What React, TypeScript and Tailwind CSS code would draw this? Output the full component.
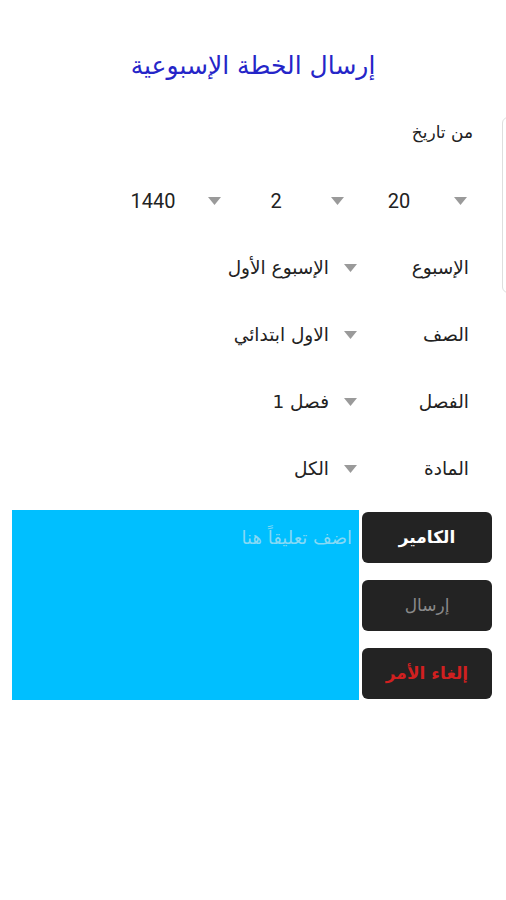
import React from "react";

const Arrow = () => (
  <svg width="13" height="8" viewBox="0 0 13 8" className="shrink-0">
    <polygon points="0,0 13,0 6.5,8" fill="#9a9a9a" />
  </svg>
);

const Spinner = ({ value }: { value: string }) => (
  <div className="flex w-[123px] items-center">
    <Arrow />
    <div className="flex-1 text-center text-[20px] text-[#222]" style={{ fontFamily: "Roboto, sans-serif" }}>
      {value}
    </div>
  </div>
);

const Row = ({ label, value }: { label: string; value: string }) => (
  <div className="flex h-[67px] items-center pr-[37px]">
    <div className="w-[112px] text-[18.5px] text-[#222]">{label}</div>
    <Arrow />
    <div className="mr-[15px] text-[18.5px] text-[#222]">{value}</div>
  </div>
);

export default function App() {
  return (
    <div
      dir="rtl"
      className="relative h-[900px] w-[506px] overflow-hidden bg-white"
      style={{ fontFamily: '"DejaVu Sans", "Noto Sans", sans-serif' }}
    >
      <div className="absolute right-[-12px] top-[117px] h-[176px] w-[16px] rounded-md border border-[#dedede]" />
      <div className="pt-[50px] text-center text-[25px] leading-[32px] text-[#2525c8]">إرسال الخطة الإسبوعية</div>
      <div className="mt-[38px] pr-[33px] text-[17px] leading-[24px] text-[#222]">من تاريخ</div>
      <div className="mt-[42px] flex h-[30px] items-center pr-[39px]">
        <Spinner value="20" />
        <Spinner value="2" />
        <Spinner value="1440" />
      </div>
      <div className="mt-[18px] flex flex-col">
        <Row label="الإسبوع" value="الإسبوع الأول" />
        <Row label="الصف" value="الاول ابتدائي" />
        <Row label="الفصل" value="فصل 1" />
        <Row label="المادة" value="الكل" />
      </div>
      <div className="mt-[8px] flex gap-[3px] pr-[14px]">
        <div className="flex w-[130px] flex-col gap-[17px] pt-[2px]">
          <button className="h-[51px] rounded-md bg-[#232323] text-[17px] font-bold text-white">الكامير</button>
          <button className="h-[51px] rounded-md bg-[#232323] text-[17px] text-[#8a8a8a]">إرسال</button>
          <button className="h-[51px] rounded-md bg-[#232323] text-[17px] font-bold text-[#d02020]">إلغاء الأمر</button>
        </div>
        <div className="h-[190px] w-[347px] bg-[#00bfff] pr-[7px] pt-[14px] text-[18px] text-[#86d9f5]">
          اضف تعليقاً هنا
        </div>
      </div>
    </div>
  );
}
